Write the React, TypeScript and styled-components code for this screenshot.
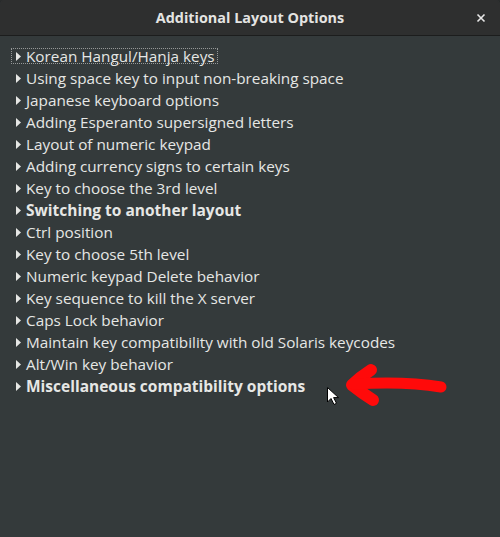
import React from "react";
import styled, { createGlobalStyle } from "styled-components";

const Global = createGlobalStyle`
  html, body { margin: 0; padding: 0; background: #2a2c2c; }
  body { font-family: "Open Sans", "Noto Sans", "DejaVu Sans", sans-serif; }
`;

const Window = styled.div`
  width: 500px;
  height: 537px;
  display: flex;
  flex-direction: column;
  background: #343a3b;
  border-radius: 5px 5px 0 0;
  overflow: hidden;
  position: relative;
`;

const TitleBar = styled.div`
  height: 35px;
  flex: none;
  background: #2e2f2f;
  border-bottom: 1px solid #1c1d1d;
  display: flex;
  align-items: center;
  justify-content: center;
  position: relative;
  color: #e4e4e2;
  font-weight: 700;
  font-size: 14.4px;
`;

const Close = styled.div`
  position: absolute;
  right: 14px;
  top: 13px;
  width: 10px;
  height: 10px;
  display: flex;
`;

const List = styled.div`
  padding-top: 9px;
  display: flex;
  flex-direction: column;
`;

const Row = styled.div<{ $bold?: boolean }>`
  height: 22px;
  display: flex;
  align-items: center;
  padding-left: 12px;
  color: #e6e7e5;
  font-size: ${(p) => (p.$bold ? "15.5px" : "15.3px")};
  font-weight: ${(p) => (p.$bold ? 700 : 400)};
  white-space: nowrap;
`;

const Item = styled.div<{ $focus?: boolean }>`
  display: flex;
  align-items: center;
  height: 14px;
  padding: 0 2px 0 4px;
  outline: ${(p) => (p.$focus ? "1px dotted rgba(230,230,230,0.55)" : "none")};
`;

const Expander = styled.svg`
  width: 5px;
  height: 9px;
  margin-right: 5px;
  flex: none;
`;

const Annotation = styled.svg`
  position: absolute;
  left: 0;
  top: 0;
  width: 500px;
  height: 537px;
  pointer-events: none;
`;

const items: { label: string; bold?: boolean }[] = [
  { label: "Korean Hangul/Hanja keys" },
  { label: "Using space key to input non-breaking space" },
  { label: "Japanese keyboard options" },
  { label: "Adding Esperanto supersigned letters" },
  { label: "Layout of numeric keypad" },
  { label: "Adding currency signs to certain keys" },
  { label: "Key to choose the 3rd level" },
  { label: "Switching to another layout", bold: true },
  { label: "Ctrl position" },
  { label: "Key to choose 5th level" },
  { label: "Numeric keypad Delete behavior" },
  { label: "Key sequence to kill the X server" },
  { label: "Caps Lock behavior" },
  { label: "Maintain key compatibility with old Solaris keycodes" },
  { label: "Alt/Win key behavior" },
  { label: "Miscellaneous compatibility options", bold: true },
];

export default function App() {
  return (
    <>
      <Global />
      <Window>
        <TitleBar>
          Additional Layout Options
          <Close>
            <svg width="10" height="10" viewBox="0 0 10 10">
              <path d="M1.5 1.5 L8.5 8.5 M8.5 1.5 L1.5 8.5" stroke="#e8e8e8" strokeWidth="1.6" />
            </svg>
          </Close>
        </TitleBar>
        <List>
          {items.map((it, i) => (
            <Row key={it.label} $bold={it.bold}>
              <Item $focus={i === 0}>
                <Expander viewBox="0 0 5 9">
                  <path d="M0 0 L5 4.5 L0 9 Z" fill="#e6e7e5" />
                </Expander>
                {it.label}
              </Item>
            </Row>
          ))}
        </List>
        <Annotation viewBox="0 0 500 537">
          <g fill="none" stroke="#ff0a0a" strokeLinecap="round" strokeLinejoin="round">
            <path d="M371 370 Q360 377 352 385 Q362 393 373 400" strokeWidth="12" />
            <path d="M354 384 C 385 382, 412 382, 441 387" strokeWidth="11" />
          </g>
          <path
            d="M327.5 387.5 L327.5 402 L331 398.5 L334 404.5 L336.5 403.3 L333.6 397.6 L338.5 397.6 Z"
            fill="#ffffff"
            stroke="#000000"
            strokeWidth="1"
            strokeLinejoin="round"
          />
        </Annotation>
      </Window>
    </>
  );
}
